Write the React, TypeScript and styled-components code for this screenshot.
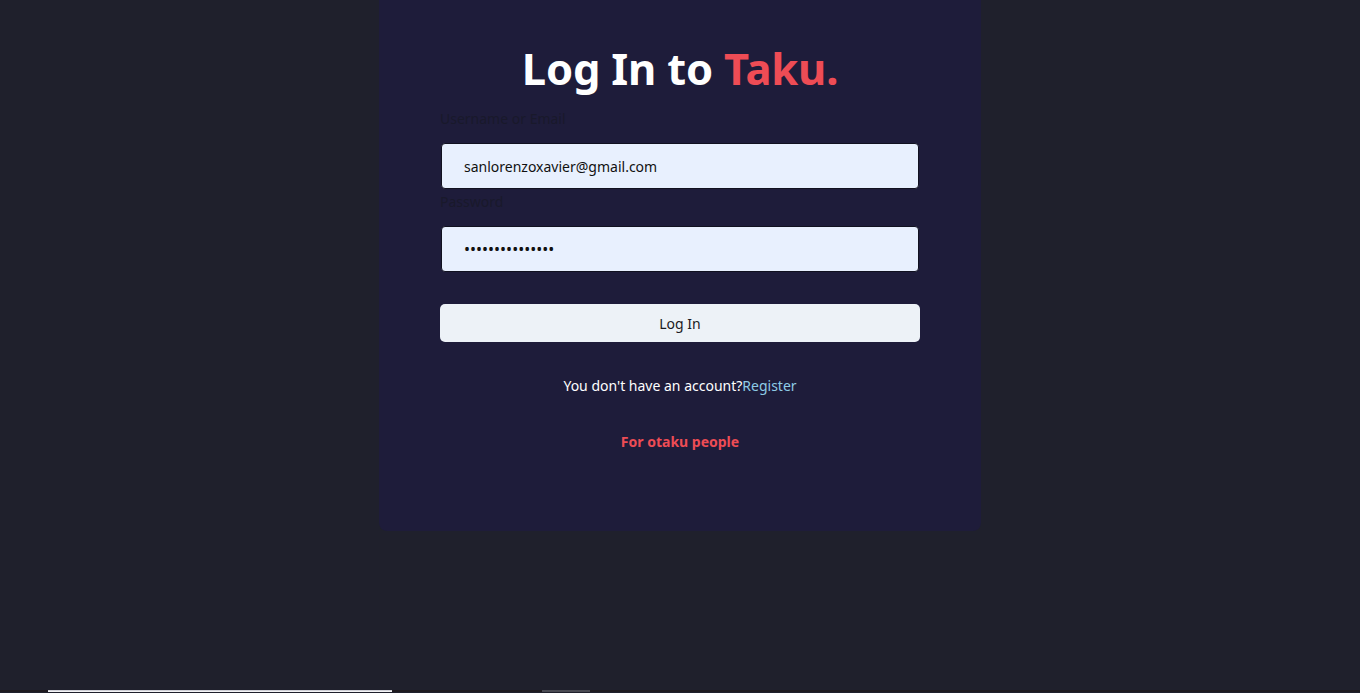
import React from "react";
import styled, { createGlobalStyle } from "styled-components";

const Global = createGlobalStyle`
  html, body { margin: 0; padding: 0; background: #1f202c; }
  body { font-family: "Noto Sans", "Open Sans", sans-serif; overflow: hidden; }
  * { box-sizing: border-box; }
`;

const Page = styled.div`
  min-height: 693px;
  display: flex;
  flex-direction: column;
  align-items: stretch;
`;

const Card = styled.main`
  width: 602px;
  margin: 0 auto;
  background: #1e1c3a;
  border-radius: 0 0 8px 8px;
  padding: 40px 60px 79px;
  display: flex;
  flex-direction: column;
  align-items: center;
`;

const Title = styled.h1`
  margin: 0;
  font-size: 43.5px;
  line-height: 56px;
  font-weight: 700;
  color: #ffffff;
  letter-spacing: -0.2px;
`;

const Brand = styled.span`
  color: #ee4c55;
`;

const Form = styled.form`
  width: 480px;
  margin-top: 14px;
  display: flex;
  flex-direction: column;
`;

const Label = styled.label`
  font-size: 14px;
  line-height: 18px;
  color: #19192b;
  margin-bottom: 15px;
`;

const Input = styled.input<{ $mb: number }>`
  width: 478px;
  margin-left: 1px;
  height: 46px;
  border: 1px solid #111120;
  border-radius: 4px;
  background: #e8f0fe;
  padding: 0 22px;
  font-family: inherit;
  font-size: 14px;
  color: #111;
  outline: none;
  margin-bottom: ${(p) => p.$mb}px;
  &[type="password"] { font-size: 16px; }
`;

const Button = styled.button`
  width: 480px;
  height: 38px;
  border: none;
  border-radius: 5px;
  background: #edf2f7;
  color: #1a1a22;
  font-family: inherit;
  font-size: 14px;
  cursor: pointer;
`;

const Prompt = styled.p`
  margin: 34px 0 0;
  font-size: 14px;
  line-height: 20px;
  color: #ffffff;
  text-align: center;
`;

const Link = styled.a`
  color: #8ecbe6;
  text-decoration: none;
`;

const Tagline = styled.p`
  margin: 36px 0 0;
  font-size: 14px;
  line-height: 20px;
  font-weight: 700;
  color: #ee4c55;
  text-align: center;
`;

const Footer = styled.div`
  margin-top: 159px;
  height: 2px;
  display: flex;
  align-items: stretch;
  background: #1e1a1f;
`;

const FooterField = styled.div`
  margin-left: 48px;
  width: 344px;
  background: #f4f4f6;
  border-top: 1px solid #cfcfd6;
`;

const FooterChip = styled.div`
  margin-left: 150px;
  width: 48px;
  background: #4a4a52;
`;

export default function App() {
  return (
    <Page>
      <Global />
      <Card>
        <Title>
          Log In to <Brand>Taku.</Brand>
        </Title>
        <Form onSubmit={(e) => e.preventDefault()}>
          <Label htmlFor="user">Username or Email</Label>
          <Input id="user" type="text" defaultValue="sanlorenzoxavier@gmail.com" $mb={4} />
          <Label htmlFor="pass">Password</Label>
          <Input id="pass" type="password" defaultValue="xxxxxxxxxxxxxxx" $mb={32} />
          <Button type="submit">Log In</Button>
        </Form>
        <Prompt>
          You don't have an account?<Link href="#">Register</Link>
        </Prompt>
        <Tagline>For otaku people</Tagline>
      </Card>
      <Footer>
        <FooterField />
        <FooterChip />
      </Footer>
    </Page>
  );
}
